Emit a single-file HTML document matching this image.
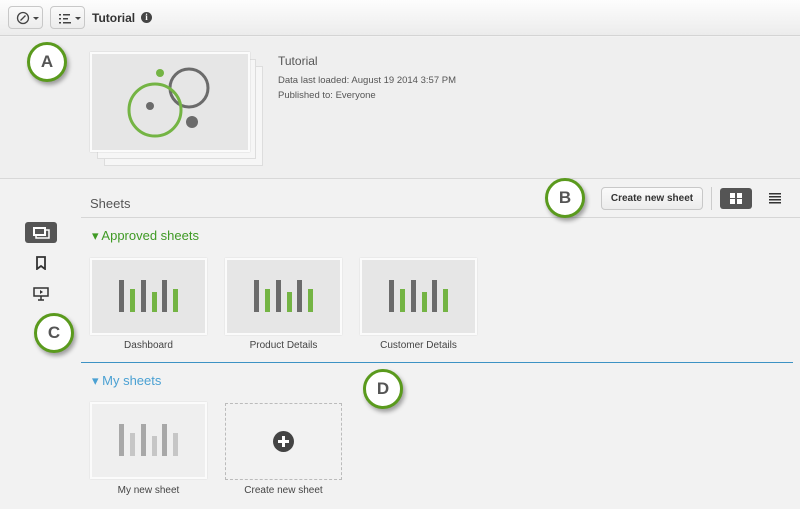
<!DOCTYPE html><html><head><style>
*{margin:0;padding:0;box-sizing:border-box}
body{width:800px;height:509px;overflow:hidden;background:#f2f2f2;font-family:"Liberation Sans",sans-serif;position:relative;color:#444}
.a{position:absolute}
.top{left:0;top:0;width:800px;height:36px;background:linear-gradient(#fdfdfd,#ececec);border-bottom:1px solid #d4d4d4}
.btn{border:1px solid #c8c8c8;border-radius:4px;background:linear-gradient(#fafafa,#ececec)}
.circ{width:40px;height:40px;border-radius:50%;background:#fff;border:3px solid #5a9a1d;box-shadow:2px 3px 4px rgba(0,0,0,.35);font:bold 17px "Liberation Sans",sans-serif;color:#555;text-align:center;line-height:34px}
.card{width:117px;height:77px;background:#e6e6e6;border:2px solid #fbfbfb;box-shadow:0 0 1px #ccc}
.bar{position:absolute;width:5px;bottom:21px}
.lbl{font-size:10px;color:#444;width:117px;text-align:center}
</style></head><body>
<div class="a top"></div>
<div class="a btn" style="left:8px;top:6px;width:35px;height:23px"><svg width="35" height="23"><circle cx="14" cy="11" r="5.5" fill="none" stroke="#444" stroke-width="1.3"/><path d="M11.5 13.5L16.5 8.5" stroke="#444" stroke-width="1.3"/><path d="M24 10h6l-3 3z" fill="#444"/></svg></div>
<div class="a btn" style="left:50px;top:6px;width:35px;height:23px"><svg width="35" height="23"><g fill="#444"><rect x="8" y="7" width="2" height="1.5"/><rect x="8" y="11" width="2" height="1.5"/><rect x="8" y="15" width="2" height="1.5"/><rect x="12" y="7" width="7" height="1.5"/><rect x="12" y="11" width="5" height="1.5"/><rect x="12" y="15" width="8" height="1.5"/><path d="M24 10h6l-3 3z"/></g></svg></div>
<div class="a" style="left:92px;top:11px;font-size:12px;font-weight:bold;color:#333">Tutorial</div>
<div class="a" style="left:141px;top:12px;width:11px;height:11px;border-radius:50%;background:#444;color:#fff;font:bold 9px 'Liberation Serif',serif;text-align:center;line-height:11px">i</div>
<div class="a" style="left:0;top:37px;width:800px;height:142px;background:#efefef;border-bottom:1px solid #d8d8d8"></div>
<div class="a circ" style="left:27px;top:42px">A</div>
<div class="a" style="left:104px;top:66px;width:159px;height:100px;background:#f6f6f6;border:1px solid #ddd"></div>
<div class="a" style="left:97px;top:59px;width:159px;height:100px;background:#f6f6f6;border:1px solid #ddd"></div>
<div class="a" style="left:90px;top:52px;width:160px;height:100px;background:#e6e6e6;border:2px solid #fbfbfb;box-shadow:0 0 1px #bbb"></div>
<svg class="a" style="left:0;top:0" width="260" height="160"><circle cx="189" cy="88" r="19" fill="none" stroke="#6b6b6b" stroke-width="3"/><circle cx="155" cy="110" r="26" fill="none" stroke="#74b444" stroke-width="3"/><circle cx="160" cy="73" r="4" fill="#74b444"/><circle cx="150" cy="106" r="4" fill="#6b6b6b"/><circle cx="192" cy="122" r="6" fill="#6b6b6b"/></svg>
<div class="a" style="left:278px;top:54px;font-size:12px;color:#555">Tutorial</div>
<div class="a" style="left:278px;top:73px;font-size:9.5px;color:#555;line-height:15px">Data last loaded: August 19 2014 3:57 PM<br>Published to: Everyone</div>
<div class="a" style="left:90px;top:196px;font-size:13px;color:#555">Sheets</div>
<div class="a" style="left:81px;top:217px;width:719px;height:1px;background:#d6d6d6"></div>
<div class="a circ" style="left:545px;top:178px">B</div>
<div class="a btn" style="left:601px;top:187px;width:102px;height:23px;font-size:10px;font-weight:bold;color:#333;text-align:center;line-height:21px">Create new sheet</div>
<div class="a" style="left:711px;top:187px;width:1px;height:23px;background:#ccc"></div>
<div class="a" style="left:720px;top:188px;width:32px;height:21px;background:#555;border-radius:3px"><svg width="32" height="21"><g fill="#fff"><rect x="10" y="5" width="5" height="5"/><rect x="17" y="5" width="5" height="5"/><rect x="10" y="11" width="5" height="5"/><rect x="17" y="11" width="5" height="5"/></g></svg></div>
<svg class="a" style="left:768px;top:191px" width="14" height="14"><g fill="#333"><rect x="1" y="2" width="12" height="1.5"/><rect x="1" y="5" width="12" height="1.5"/><rect x="1" y="8" width="12" height="1.5"/><rect x="1" y="11" width="12" height="1.5"/></g></svg>
<div class="a" style="left:25px;top:222px;width:32px;height:21px;background:#555;border-radius:3px"><svg width="32" height="21"><rect x="8" y="5" width="13" height="9" fill="#fff"/><rect x="10" y="7" width="9" height="5" fill="#555"/><path d="M21 8h3v8H11v-2" fill="none" stroke="#fff" stroke-width="1.5"/></svg></div>
<svg class="a" style="left:34px;top:256px" width="14" height="14"><path d="M3 1h8v12l-4-3-4 3z" fill="none" stroke="#333" stroke-width="1.8"/></svg>
<svg class="a" style="left:32px;top:286px" width="18" height="16"><rect x="2" y="2" width="14" height="8" fill="none" stroke="#333" stroke-width="1.5"/><path d="M8 4l3 2-3 2z" fill="#333"/><path d="M9 10v4M6 14h6" stroke="#333" stroke-width="1.5"/></svg>
<div class="a circ" style="left:34px;top:313px">C</div>
<div class="a" style="left:92px;top:228px;font-size:13px;color:#3f9a24">▾ Approved sheets</div>
<div class="a" style="left:81px;top:362px;width:712px;height:1px;background:#3d92c4"></div>
<div class="a circ" style="left:363px;top:369px">D</div>
<div class="a" style="left:92px;top:373px;font-size:13px;color:#4ba1d3">▾ My sheets</div>
<div id="cards"></div>
<script>
function card(x,y,light){let c=['#6b6b6b','#74b444'];if(light)c=['#a8a8a8','#c6c6c6'];
let h=`<div class="a card" style="left:${x}px;top:${y}px;${light?'background:#efefef':''}">`;
const off=[29,40,51,62,72,83],tops=[22,31,22,34,22,31];
for(let i=0;i<6;i++)h+=`<div class="bar" style="left:${off[i]-2}px;top:${tops[i]-2}px;bottom:auto;height:${54-tops[i]}px;background:${c[i%2]}"></div>`;
return h+'</div>';}
let s='';
[[90,'Dashboard'],[225,'Product Details'],[360,'Customer Details']].forEach(([x,t])=>{s+=card(x,258,0)+`<div class="a lbl" style="left:${x}px;top:340px">${t}</div>`;});
s+=card(90,402,1)+`<div class="a lbl" style="left:90px;top:485px">My new sheet</div>`;
s+=`<div class="a" style="left:225px;top:403px;width:117px;height:77px;border:1px dashed #bbb"></div><div class="a" style="left:273px;top:431px;width:21px;height:21px;border-radius:50%;background:#444"><svg width="21" height="21"><path d="M10.5 5v11M5 10.5h11" stroke="#fff" stroke-width="3"/></svg></div><div class="a lbl" style="left:225px;top:485px">Create new sheet</div>`;
document.getElementById('cards').innerHTML=s;
</script>
</body></html>
